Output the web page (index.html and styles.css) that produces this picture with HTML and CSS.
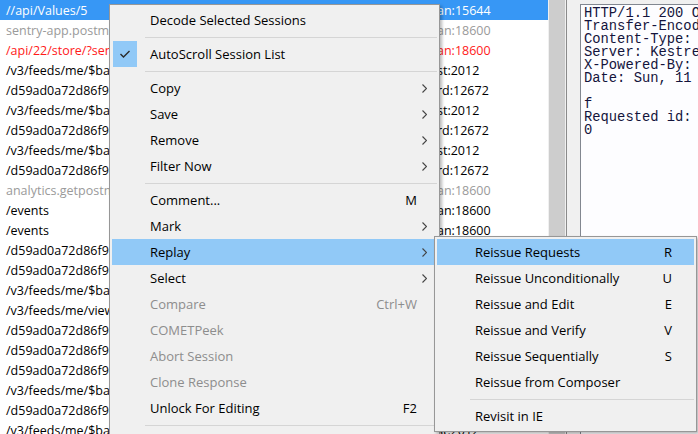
FILE: index.html
```html
<!DOCTYPE html>
<html>
<head>
<meta charset="utf-8">
<link rel="stylesheet" href="styles.css">
</head>
<body>
<div class="app">
  <div class="sessions">
    <div class="list">
      <div class="row sel"><span class="c1">//api/Values/5</span><span class="c2">an:15644</span></div>
      <div class="row tunnel"><span class="c1">sentry-app.postman.com:443</span><span class="c2">an:18600</span></div>
      <div class="row err"><span class="c1">/api/22/store/?sentry_version=7</span><span class="c2">an:18600</span></div>
      <div class="row"><span class="c1">/v3/feeds/me/$batch</span><span class="c2">st:2012</span></div>
      <div class="row"><span class="c1">/d59ad0a72d86f9b1c2e3</span><span class="c2">rd:12672</span></div>
      <div class="row"><span class="c1">/v3/feeds/me/$batch</span><span class="c2">st:2012</span></div>
      <div class="row"><span class="c1">/d59ad0a72d86f9b1c2e3</span><span class="c2">rd:12672</span></div>
      <div class="row"><span class="c1">/v3/feeds/me/$batch</span><span class="c2">st:2012</span></div>
      <div class="row"><span class="c1">/d59ad0a72d86f9b1c2e3</span><span class="c2">rd:12672</span></div>
      <div class="row tunnel"><span class="c1">analytics.getpostman.com:443</span><span class="c2">an:18600</span></div>
      <div class="row"><span class="c1">/events</span><span class="c2">an:18600</span></div>
      <div class="row"><span class="c1">/events</span><span class="c2">an:18600</span></div>
      <div class="row"><span class="c1">/d59ad0a72d86f9b1c2e3</span><span class="c2">rd:12672</span></div>
      <div class="row"><span class="c1">/d59ad0a72d86f9b1c2e3</span><span class="c2">rd:12672</span></div>
      <div class="row"><span class="c1">/v3/feeds/me/$batch</span><span class="c2">st:2012</span></div>
      <div class="row"><span class="c1">/v3/feeds/me/views</span><span class="c2">st:2012</span></div>
      <div class="row"><span class="c1">/d59ad0a72d86f9b1c2e3</span><span class="c2">rd:12672</span></div>
      <div class="row"><span class="c1">/d59ad0a72d86f9b1c2e3</span><span class="c2">rd:12672</span></div>
      <div class="row"><span class="c1">/d59ad0a72d86f9b1c2e3</span><span class="c2">rd:12672</span></div>
      <div class="row"><span class="c1">/v3/feeds/me/$batch</span><span class="c2">st:2012</span></div>
      <div class="row"><span class="c1">/d59ad0a72d86f9b1c2e3</span><span class="c2">rd:12672</span></div>
      <div class="row"><span class="c1">/v3/feeds/me/$batch</span><span class="c2">st:2012</span></div>
    </div>
    <div class="vscroll"><div class="thumb"></div></div>
  </div>
  <div class="gap"></div>
  <div class="inspector">
<pre class="raw">HTTP/1.1 200 OK
Transfer-Encoding: chunked
Content-Type: text/plain
Server: Kestrel
X-Powered-By: ASP.NET
Date: Sun, 11 Mar 2018

f
Requested id: 5
0</pre>
  </div>
</div>

<div class="menu main-menu">
  <div class="item"><span class="label">Decode Selected Sessions</span></div>
  <div class="sep"></div>
  <div class="item"><span class="check"><svg width="12" height="10" viewBox="0 0 12 10"><polyline points="1.5,5 4.5,8 10.5,2" fill="none" stroke="#2b2b2b" stroke-width="1.4"/></svg></span><span class="label">AutoScroll Session List</span></div>
  <div class="sep"></div>
  <div class="item"><span class="label">Copy</span><span class="arrow"><svg width="5" height="9" viewBox="0 0 5 9"><path d="M0.5 0.5 L4.5 4.5 L0.5 8.5" fill="none" stroke="#444" stroke-width="1.1"/></svg></span></div>
  <div class="item"><span class="label">Save</span><span class="arrow"><svg width="5" height="9" viewBox="0 0 5 9"><path d="M0.5 0.5 L4.5 4.5 L0.5 8.5" fill="none" stroke="#444" stroke-width="1.1"/></svg></span></div>
  <div class="item"><span class="label">Remove</span><span class="arrow"><svg width="5" height="9" viewBox="0 0 5 9"><path d="M0.5 0.5 L4.5 4.5 L0.5 8.5" fill="none" stroke="#444" stroke-width="1.1"/></svg></span></div>
  <div class="item"><span class="label">Filter Now</span><span class="arrow"><svg width="5" height="9" viewBox="0 0 5 9"><path d="M0.5 0.5 L4.5 4.5 L0.5 8.5" fill="none" stroke="#444" stroke-width="1.1"/></svg></span></div>
  <div class="sep"></div>
  <div class="item"><span class="label">Comment...</span><span class="key">M</span></div>
  <div class="item"><span class="label">Mark</span><span class="arrow"><svg width="5" height="9" viewBox="0 0 5 9"><path d="M0.5 0.5 L4.5 4.5 L0.5 8.5" fill="none" stroke="#444" stroke-width="1.1"/></svg></span></div>
  <div class="item hot"><span class="label">Replay</span><span class="arrow"><svg width="5" height="9" viewBox="0 0 5 9"><path d="M0.5 0.5 L4.5 4.5 L0.5 8.5" fill="none" stroke="#444" stroke-width="1.1"/></svg></span></div>
  <div class="item"><span class="label">Select</span><span class="arrow"><svg width="5" height="9" viewBox="0 0 5 9"><path d="M0.5 0.5 L4.5 4.5 L0.5 8.5" fill="none" stroke="#444" stroke-width="1.1"/></svg></span></div>
  <div class="item off"><span class="label">Compare</span><span class="key">Ctrl+W</span></div>
  <div class="item off"><span class="label">COMETPeek</span></div>
  <div class="item off"><span class="label">Abort Session</span></div>
  <div class="item off"><span class="label">Clone Response</span></div>
  <div class="item"><span class="label">Unlock For Editing</span><span class="key">F2</span></div>
  <div class="sep"></div>
</div>

<div class="menu sub-menu">
  <div class="item hot"><span class="label">Reissue Requests</span><span class="key">R</span></div>
  <div class="item"><span class="label">Reissue Unconditionally</span><span class="key">U</span></div>
  <div class="item"><span class="label">Reissue and Edit</span><span class="key">E</span></div>
  <div class="item"><span class="label">Reissue and Verify</span><span class="key">V</span></div>
  <div class="item"><span class="label">Reissue Sequentially</span><span class="key">S</span></div>
  <div class="item"><span class="label">Reissue from Composer</span></div>
  <div class="sep"></div>
  <div class="item"><span class="label">Revisit in IE</span></div>
</div>
</body>
</html>
```

FILE: styles.css
```css
html, body {
  margin: 0;
  padding: 0;
}
body {
  width: 698px;
  height: 434px;
  overflow: hidden;
  background: #f0f0f0;
  font-family: "Open Sans", "Noto Sans", sans-serif;
  position: relative;
}
.app {
  display: flex;
  height: 434px;
}
.sessions {
  display: flex;
  width: 567px;
  background: #fff;
  border-right: 1px solid #8a8a8a;
  box-sizing: border-box;
  flex: none;
}
.list {
  width: 548px;
  display: flex;
  flex-direction: column;
  overflow: hidden;
}
.row {
  display: flex;
  height: 20px;
  line-height: 22px;
  font-size: 12.5px;
  color: #000;
  white-space: nowrap;
  flex: none;
}
.row.sel {
  background: #3797f5;
  color: #fff;
}
.row.tunnel {
  color: #9a9a9a;
}
.row.err {
  color: #ff1a1a;
}
.c1 {
  width: 430px;
  padding-left: 6px;
  overflow: hidden;
  flex: none;
}
.c2 {
  padding-left: 1px;
}
.vscroll {
  width: 18px;
  background: #f0f0f0;
  padding: 0 1px;
  box-sizing: border-box;
  display: flex;
}
.thumb {
  flex: 1;
  background: #cdcdcd;
}
.gap {
  width: 13px;
  flex: none;
}
.inspector {
  flex: 1;
  margin-top: 4px;
  background: #fdfdff;
  border: 1px solid #828790;
  border-right: none;
  border-bottom: none;
  overflow: hidden;
}
.raw {
  margin: 0;
  padding: 2px 0 0 3px;
  font-family: "Liberation Mono", monospace;
  font-size: 13.8px;
  line-height: 13px;
  color: #14143c;
  white-space: pre;
}
.menu {
  position: absolute;
  background: #f0f0f0;
  border: 1px solid #979797;
  box-shadow: 2px 2px 3px rgba(0, 0, 0, 0.28);
  padding: 2px;
  box-sizing: border-box;
  font-size: 13px;
  color: #000;
}
.main-menu {
  left: 109px;
  top: 4px;
  width: 331px;
  height: 460px;
}
.sub-menu {
  left: 434px;
  top: 236px;
  width: 263px;
  padding-top: 2px;
}
.item {
  display: flex;
  align-items: center;
  height: 26px;
  position: relative;
  white-space: nowrap;
}
.item.hot {
  background: #91c9f7;
}
.item.off {
  color: #8d8d8d;
}
.main-menu .label {
  padding-left: 38px;
  flex: 1;
}
.sub-menu .label {
  padding-left: 38px;
  flex: 1;
}
.check {
  position: absolute;
  left: 1px;
  top: 0;
  width: 24px;
  height: 26px;
  background: #91c9f7;
  display: flex;
  align-items: center;
  justify-content: center;
}
.check svg {
  display: block;
}
.arrow {
  width: 5px;
  margin-right: 10px;
  display: flex;
}
.main-menu .key {
  margin-right: 20px;
}
.sub-menu .key {
  margin-right: 22px;
}
.sep {
  height: 8px;
  display: flex;
  align-items: center;
  padding-left: 33px;
}
.sep::before {
  content: "";
  flex: 1;
  height: 1px;
  background: #d5d5d5;
}
```
